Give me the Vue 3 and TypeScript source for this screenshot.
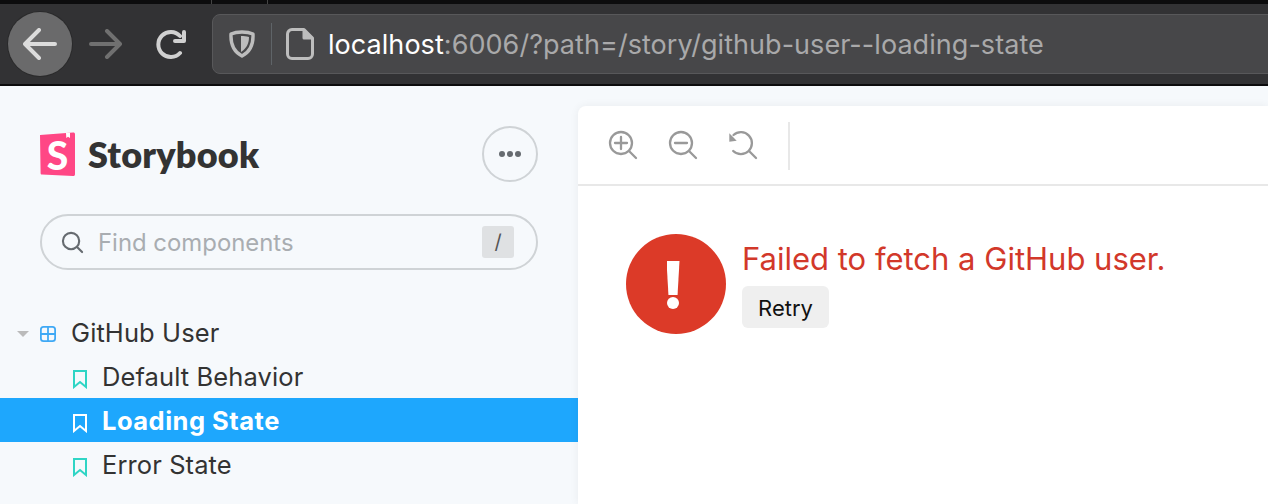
<script setup lang="ts">
const stories = [
  { name: 'Default Behavior', active: false },
  { name: 'Loading State', active: true },
  { name: 'Error State', active: false },
]
</script>

<template>
  <div class="page">
    <header class="browser">
      <div class="tabstrip"><i class="tick t1"></i><i class="tick t2"></i></div>
      <div class="toolbar">
        <button class="back">
          <svg width="34" height="32" viewBox="0 0 34 32" fill="none" stroke="#dcdcdc" stroke-width="4" stroke-linecap="round" stroke-linejoin="round"><path d="M2 16H32M16 2L2 16L16 30"/></svg>
        </button>
        <svg class="forward" width="34" height="30" viewBox="0 0 34 30" fill="none" stroke="#707070" stroke-width="4" stroke-linecap="round" stroke-linejoin="round"><path d="M2 15H31M18 2L31 15L18 28"/></svg>
        <svg class="reload" width="32" height="30" viewBox="0 0 32 30" fill="none" stroke="#d0d0d0" stroke-width="4" stroke-linecap="round" stroke-linejoin="round"><path d="M25 7A12.5 12.5 0 1 0 25 24"/><path d="M29 3V12H20"/></svg>
        <div class="urlbar">
          <svg class="shield" width="26" height="28" viewBox="0 0 26 28" fill="none"><path d="M13 2C17 2 21 2.600 24 4C24.500 14 21 22 13 26C5 22 1.500 14 2 4C5 2.600 9 2 13 2Z" stroke="#bdbdbd" stroke-width="3.400" stroke-linejoin="round"/><path d="M12 6C15 6 17 6.300 20 7C20 13 18 18 12 22Z" fill="#bdbdbd"/></svg>
          <i class="divider"></i>
          <svg class="doc" width="28" height="32" viewBox="0 0 28 32" fill="none" stroke="#bdbdbd" stroke-width="3" stroke-linejoin="round"><path d="M6 1.500H18L26.500 10V26A4.500 4.500 0 0 1 22 30.500H6A4.500 4.500 0 0 1 1.500 26V6A4.500 4.500 0 0 1 6 1.500Z"/><path d="M18 1.500V10H26.500" fill="#bdbdbd"/></svg>
          <span class="url"><b>localhost</b>:6006/?path=/story/github-user--loading-state</span>
        </div>
      </div>
    </header>

    <div class="app">
      <aside class="sidebar">
        <div class="brand">
          <div class="logo-wrap">
            <svg class="logo" width="35" height="44" viewBox="0 0 35 44"><path d="M0 3L33 .5C34.500 .5 35 1 35 2.500V42C35 43.500 34.500 44 33 44L2 42.500C1 42.500 .6 42 .6 41Z" fill="#ff4785"/><path d="M26 1L26.300 6L28 4.700L30 6L30 .8Z" fill="#fff"/></svg>
            <span class="logo-s">S</span>
          </div>
          <span class="wordmark">Storybook</span>
          <button class="more"><i></i><i></i><i></i></button>
        </div>
        <div class="search">
          <svg width="23" height="23" viewBox="0 0 24 24" fill="none" stroke="#666b70" stroke-width="2.200" stroke-linecap="round"><circle cx="10.500" cy="10.500" r="8.500"/><path d="M17 17L22 22"/></svg>
          <span class="placeholder">Find components</span>
          <kbd>/</kbd>
        </div>
        <nav class="tree">
          <div class="row component">
            <i class="caret"></i>
            <svg width="16" height="16" viewBox="0 0 18 18" fill="none" stroke="#3fa9f5" stroke-width="2"><rect x="1" y="1" width="16" height="16" rx="3"/><path d="M9 1V17M1 9H17"/></svg>
            <span>GitHub User</span>
          </div>
          <div v-for="s in stories" :key="s.name" class="row story" :class="{ active: s.active }">
            <svg width="16" height="20" viewBox="0 0 16 20" fill="none" stroke="currentColor" stroke-width="2" stroke-linejoin="miter"><path d="M2 2H14V18L8 13L2 18Z"/></svg>
            <span>{{ s.name }}</span>
          </div>
        </nav>
      </aside>

      <main class="panel">
        <div class="tools">
          <svg width="32" height="32" viewBox="0 0 32 32" fill="none" stroke="#999" stroke-width="2.300" stroke-linecap="round"><circle cx="14" cy="14" r="11"/><path d="M22 22L29 29M14 8V20M8 14H20"/></svg>
          <svg width="32" height="32" viewBox="0 0 32 32" fill="none" stroke="#999" stroke-width="2.300" stroke-linecap="round"><circle cx="14" cy="14" r="11"/><path d="M22 22L29 29M8 14H20"/></svg>
          <svg width="32" height="32" viewBox="0 0 32 32" fill="none" stroke="#999" stroke-width="2.300" stroke-linecap="round"><path d="M6.500 6A11 11 0 1 1 6.200 22"/><path d="M22 22L29 29"/><path d="M2.300 4.300L2.300 12.700L9.700 11.700Z" fill="#999" stroke="none"/></svg>
          <i class="sep"></i>
        </div>
        <div class="canvas">
          <div class="alert-icon"><i class="bar"></i><i class="dot"></i></div>
          <div class="message">
            <p>Failed to fetch a GitHub user.</p>
            <button class="retry">Retry</button>
          </div>
        </div>
      </main>
    </div>
  </div>
</template>

<style>
html, body { margin: 0; background: #f6f9fc; overflow: hidden; }
</style>

<style scoped>
.page { width: 1268px; height: 504px; display: flex; flex-direction: column; overflow: hidden; font-family: Inter, "Liberation Sans", sans-serif; }
button { font: inherit; border: 0; padding: 0; }
i { display: block; }

.browser { height: 86px; background: #323234; border-bottom: 2px solid #0c0c0d; box-sizing: border-box; flex: none; }
.tabstrip { height: 4px; background: #0c0c0d; position: relative; }
.tick { position: absolute; top: 0; width: 1px; height: 4px; background: #444; }
.t1 { left: 211px; }
.t2 { left: 267px; }
.toolbar { height: 80px; display: flex; align-items: center; padding-left: 8px; }
.back { width: 64px; height: 64px; border-radius: 50%; background: #6a6a6b; box-shadow: 0 0 0 1px #2a2a2b; display: flex; align-items: center; justify-content: center; flex: none; }
.forward { margin-left: 17px; flex: none; }
.reload { margin-left: 32px; flex: none; }
.urlbar { margin-left: 25px; width: 1100px; height: 60px; box-sizing: border-box; background: #474749; border: 1px solid #58585a; border-radius: 8px; display: flex; align-items: center; padding-left: 16px; flex: none; }
.divider { width: 1px; height: 42px; background: #5f6468; margin-left: 16px; }
.doc { margin-left: 14px; flex: none; }
.url { margin-left: 14px; font-size: 27px; color: #a9a9aa; letter-spacing: 0.05px; white-space: nowrap; }
.url b { font-weight: 400; color: #fff; }

.app { flex: 1; display: flex; min-height: 0; }
.sidebar { width: 578px; flex: none; background: #f6f9fc; display: flex; flex-direction: column; }
.brand { display: flex; align-items: center; height: 76px; margin-top: 30px; padding: 0 40px; }
.logo-wrap { position: relative; width: 35px; height: 44px; flex: none; }
.logo { display: block; }
.logo-s { position: absolute; inset: 0; text-align: center; color: #fff; font: 900 39px/46px Lato, sans-serif; }
.wordmark { margin-left: 13px; font: 800 36px/1 Lato, sans-serif; color: #333; letter-spacing: 0.2px; }
.more { margin-left: auto; width: 56px; height: 56px; border-radius: 50%; background: transparent; border: 2px solid #cfd3d6; box-sizing: border-box; display: flex; align-items: center; justify-content: center; gap: 2px; }
.more i { width: 6px; height: 6px; border-radius: 50%; background: #666b70; }
.search { margin: 22px 40px 0; height: 56px; box-sizing: border-box; border: 2px solid #cfd3d6; border-radius: 28px; display: flex; align-items: center; padding: 0 22px 0 19px; }
.placeholder { margin-left: 14px; font-size: 23.900px; color: #a9adb1; }
kbd { margin-left: auto; width: 32px; height: 32px; background: #dfe1e3; border-radius: 3px; display: flex; align-items: center; justify-content: center; font: 20px Inter, sans-serif; color: #555; }
.tree { margin-top: 40px; }
.row { height: 44px; display: flex; align-items: center; font-size: 25.500px; letter-spacing: 0.1px; color: #333; }
.component { padding-left: 17px; }
.caret { width: 0; height: 0; border-left: 6px solid transparent; border-right: 6px solid transparent; border-top: 6px solid #bbb; margin: 4px 11px 0 0; }
.component svg { margin-top: 4px; flex: none; }
.component span { margin-left: 15px; }
.story { padding-left: 72px; color: #333; }
.story svg { color: #2fd5c5; flex: none; margin-top: 6px; }
.story span { margin-left: 14px; }
.active { background: #1ea7fd; color: #fff; font-weight: 700; letter-spacing: 0.5px; }
.active svg { color: #fff; }

.panel { flex: 1; margin-top: 20px; background: #fff; border-top-left-radius: 8px; box-shadow: 0 0 10px rgba(0, 0, 0, 0.06); }
.tools { height: 80px; box-sizing: border-box; border-bottom: 2px solid #e8e8e8; display: flex; align-items: center; padding-left: 29px; gap: 28px; }
.sep { width: 2px; height: 48px; background: #e8e8e8; margin: 2px 0 0 1px; }
.canvas { display: flex; align-items: flex-start; padding: 48px 48px 0; gap: 16px; }
.alert-icon { width: 100px; height: 100px; border-radius: 50%; background: #dc3a28; display: flex; flex-direction: column; align-items: center; padding: 27px 6px 0 0; box-sizing: border-box; flex: none; }
.bar { width: 13px; height: 34px; background: #fff; clip-path: polygon(0 0, 100% 0, 85% 100%, 15% 100%); }
.dot { width: 12px; height: 12px; border-radius: 50%; background: #fff; margin-top: 2px; }
.message p { margin: 6px 0 0; font-size: 31px; line-height: 38px; color: #d2382a; white-space: nowrap; }
.retry { margin-top: 8px; width: 87px; height: 42px; padding-top: 2px; background: #efefef; border-radius: 6px; font-size: 22px; color: #111; display: block; }
</style>
